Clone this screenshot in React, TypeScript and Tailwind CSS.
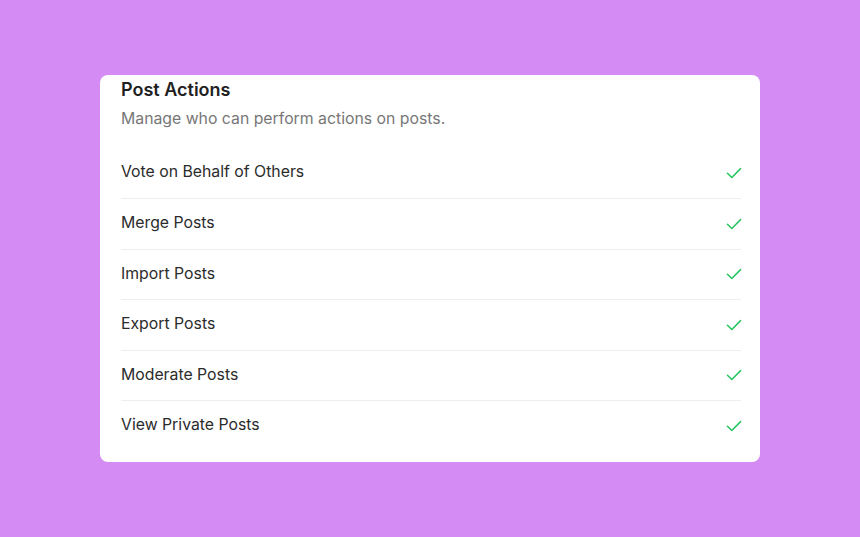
const actions = [
  'Vote on Behalf of Others',
  'Merge Posts',
  'Import Posts',
  'Export Posts',
  'Moderate Posts',
  'View Private Posts',
];

function CheckMark() {
  return (
    <svg
      width="14"
      height="10"
      viewBox="0 0 16 11.4"
      fill="none"
      stroke="#22c55e"
      strokeWidth="1.7"
      strokeLinecap="round"
      strokeLinejoin="round"
      className="overflow-visible"
    >
      <path d="M0.5 5.9 5.5 10.9 15.5 0.7" />
    </svg>
  );
}

export default function App() {
  return (
    <div
      className="min-h-screen w-full bg-[#d48bf3] flex justify-center pt-[75px]"
      style={{ fontFamily: 'Inter, "Noto Sans", sans-serif' }}
    >
      <div className="w-[660px] h-[387px] bg-white rounded-lg pl-[21px] pr-[19px] pt-[3px]">
        <h2 className="text-[18px] leading-6 font-semibold text-[#1f1f1f]">Post Actions</h2>
        <p className="mt-[6.5px] text-[15.8px] leading-5 text-[#777777]">
          Manage who can perform actions on posts.
        </p>
        <div className="mt-[19px]">
          {actions.map((a, i) => (
            <div
              key={a}
              className={`h-[50.5px] flex items-center justify-between ${
                i > 0 ? 'border-t border-[#eeeeee]' : ''
              }`}
            >
              <span className="text-[15.8px] text-[#2b2b2b] -mt-[1px]">{a}</span>
              <CheckMark />
            </div>
          ))}
        </div>
      </div>
    </div>
  );
}
